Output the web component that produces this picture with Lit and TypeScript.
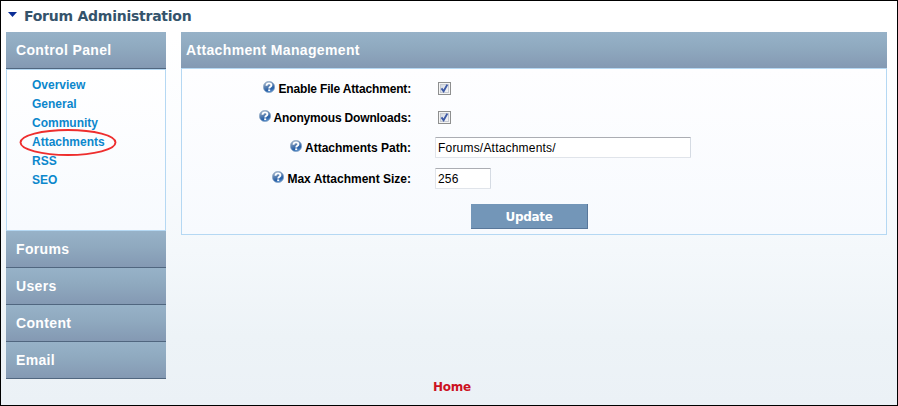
import { LitElement, html, css } from "lit";
import { customElement } from "lit/decorators.js";

@customElement("help-icon")
class HelpIcon extends LitElement {
  static styles = css`
    :host { display: block; width: 12px; height: 12px; }
    svg { display: block; }
  `;
  render() {
    return html`<svg width="12" height="12" viewBox="0 0 12 12">
      <defs>
        <linearGradient id="ball" x1="0.3" y1="0" x2="0.7" y2="1">
          <stop offset="0" stop-color="#a9bbcf" />
          <stop offset="0.35" stop-color="#6386b3" />
          <stop offset="0.7" stop-color="#2760a8" />
          <stop offset="1" stop-color="#6a9fd6" />
        </linearGradient>
      </defs>
      <circle cx="6" cy="6" r="5.7" fill="url(#ball)" stroke="#8aa4c3" stroke-width="0.6" />
      <path d="M3.5 4.7C3.6 3 4.8 2.4 6.1 2.4C7.6 2.4 8.4 3.2 8.4 4.2C8.4 5.6 6.2 5.8 6.2 7.4" fill="none" stroke="#fff" stroke-width="1.9" />
      <rect x="5.2" y="8.4" width="2" height="1.7" fill="#fff" />
    </svg>`;
  }
}

@customElement("check-mark")
class CheckMark extends LitElement {
  static styles = css`
    :host { display: block; width: 13px; height: 13px; margin-left: 3px; }
    svg { display: block; }
  `;
  render() {
    return html`<svg width="13" height="13" viewBox="0 0 13 13">
      <defs>
        <linearGradient id="well" x1="0" y1="0" x2="1" y2="1">
          <stop offset="0" stop-color="#d3d8df" />
          <stop offset="1" stop-color="#f7f8f9" />
        </linearGradient>
      </defs>
      <rect x="0.5" y="0.5" width="12" height="12" fill="#f4f4f4" stroke="#8e8f8f" />
      <rect x="2.5" y="2.5" width="8" height="8" fill="url(#well)" stroke="#c6cad2" />
      <path d="M3.5 6.4L5.6 9.2L9.3 2.6" fill="none" stroke="#3d59a5" stroke-width="1.9" />
    </svg>`;
  }
}

const LINKS = ["Overview", "General", "Community", "Attachments", "RSS", "SEO"];
const SECTIONS = ["Forums", "Users", "Content", "Email"];

@customElement("app-root")
class AppRoot extends LitElement {
  static styles = css`
    :host {
      display: block;
      font-family: "Liberation Sans", Arial, sans-serif;
      font-size: 12px;
      color: #000;
    }
    * { box-sizing: border-box; }
    .page {
      height: 406px;
      border: 1px solid #000;
      background: linear-gradient(#fff 0, #fff 35px, #fafcfe 150px, #f4f8fb 250px, #edf3f7 335px, #ebf1f6 100%);
      display: flex;
      flex-direction: column;
    }
    .title {
      height: 31px;
      flex: none;
      display: flex;
      align-items: center;
      gap: 7px;
      padding: 0 0 1px 7px;
      font: bold 14px/29px "DejaVu Sans", sans-serif;
      letter-spacing: -0.25px;
      color: #34536b;
    }
    .arrow { display: block; margin-top: -3px; }
    .columns { display: flex; gap: 15px; padding: 0 10px 0 5px; align-items: flex-start; }
    .sidebar { width: 160px; flex: none; }
    .bar {
      height: 37px;
      padding-left: 10px;
      font-weight: bold;
      font-size: 14px;
      line-height: 36px;
      letter-spacing: 0.35px;
      color: #fff;
      background: linear-gradient(#97b2c8, #8fa9bf 45%, #8499b3);
      border-bottom: 1px solid #50667f;
    }
    .links {
      height: 162px;
      border: 1px solid #b5d8f3;
      padding: 6px 0 0 25px;
      background: linear-gradient(#fff, #f7fafe);
      font-weight: bold;
      line-height: 19px;
      color: #0c87cc;
    }
    .links .item { position: relative; width: max-content; }
    .ring { position: absolute; left: -13px; top: -4px; width: 98px; height: 27px; }
    .panel { flex: 1; }
    .panel .bar { height: 36px; padding-left: 5px; border: 0; }
    .body {
      height: 167px;
      border: 1px solid #b5d8f3;
      background: linear-gradient(#fefeff, #f7fafe);
      display: flex;
      flex-direction: column;
      padding-top: 5px;
    }
    .row { display: flex; align-items: center; height: 29px; }
    .row.tall { height: 31px; }
    .label {
      width: 229px;
      margin-right: 24px;
      display: flex;
      justify-content: flex-end;
      gap: 3px;
      font-weight: bold;
      white-space: nowrap;
    }
    .label help-icon { margin-top: -1px; }
    .tight { letter-spacing: -0.16px; }
    .field {
      width: 256px;
      height: 21px;
      border: 1px solid #e0e4ea;
      border-top-color: #abadb3;
      border-right-color: #d5dbe3;
      border-radius: 1px;
      background: #fff;
      padding: 0 2px;
      font: 12px "Liberation Sans", Arial, sans-serif;
      letter-spacing: 0.2px;
      color: #000;
      outline: none;
    }
    .field.short { width: 56px; }
    .update {
      margin: 10px 0 0 289px;
      width: 117px;
      height: 25px;
      flex: none;
      padding: 2px 0 0;
      border: 0 solid #58779a;
      border-width: 0 1px 1px 0;
      background: #7396b8;
      color: #fff;
      font: bold 12px/22px "DejaVu Sans", sans-serif;
      letter-spacing: -0.3px;
    }
    .home {
      margin-top: auto;
      flex: none;
      height: 26px;
      padding-left: 6px;
      text-align: center;
      font: bold 12px/16px "DejaVu Sans", sans-serif;
      letter-spacing: -0.2px;
      color: #cc1122;
    }
  `;

  render() {
    return html`<div class="page">
      <div class="title">
        <svg class="arrow" width="9" height="5" viewBox="0 0 9 5"><path d="M0 0H9L4.5 5Z" fill="#0a2d96" /></svg>
        <span class="heading">Forum Administration</span>
      </div>
      <div class="columns">
        <div class="sidebar">
          <div class="bar">Control Panel</div>
          <div class="links">
            ${LINKS.map((name) => html`<div class="item">${name}${name === "Attachments"
              ? html`<svg class="ring" viewBox="0 0 98 27"><ellipse cx="49" cy="13.5" rx="47.5" ry="12.5" fill="none" stroke="#ee2e2e" stroke-width="1.9" /></svg>`
              : ""}</div>`)}
          </div>
          ${SECTIONS.map((name) => html`<div class="bar">${name}</div>`)}
        </div>
        <div class="panel">
          <div class="bar">Attachment Management</div>
          <div class="body">
            <div class="row"><div class="label tight"><help-icon></help-icon>Enable File Attachment:</div><check-mark></check-mark></div>
            <div class="row"><div class="label tight"><help-icon></help-icon>Anonymous Downloads:</div><check-mark></check-mark></div>
            <div class="row tall"><div class="label"><help-icon></help-icon>Attachments Path:</div><input class="field" .value=${"Forums/Attachments/"} /></div>
            <div class="row tall"><div class="label"><help-icon></help-icon>Max Attachment Size:</div><input class="field short" .value=${"256"} /></div>
            <button class="update">Update</button>
          </div>
        </div>
      </div>
      <div class="home">Home</div>
    </div>`;
  }
}
